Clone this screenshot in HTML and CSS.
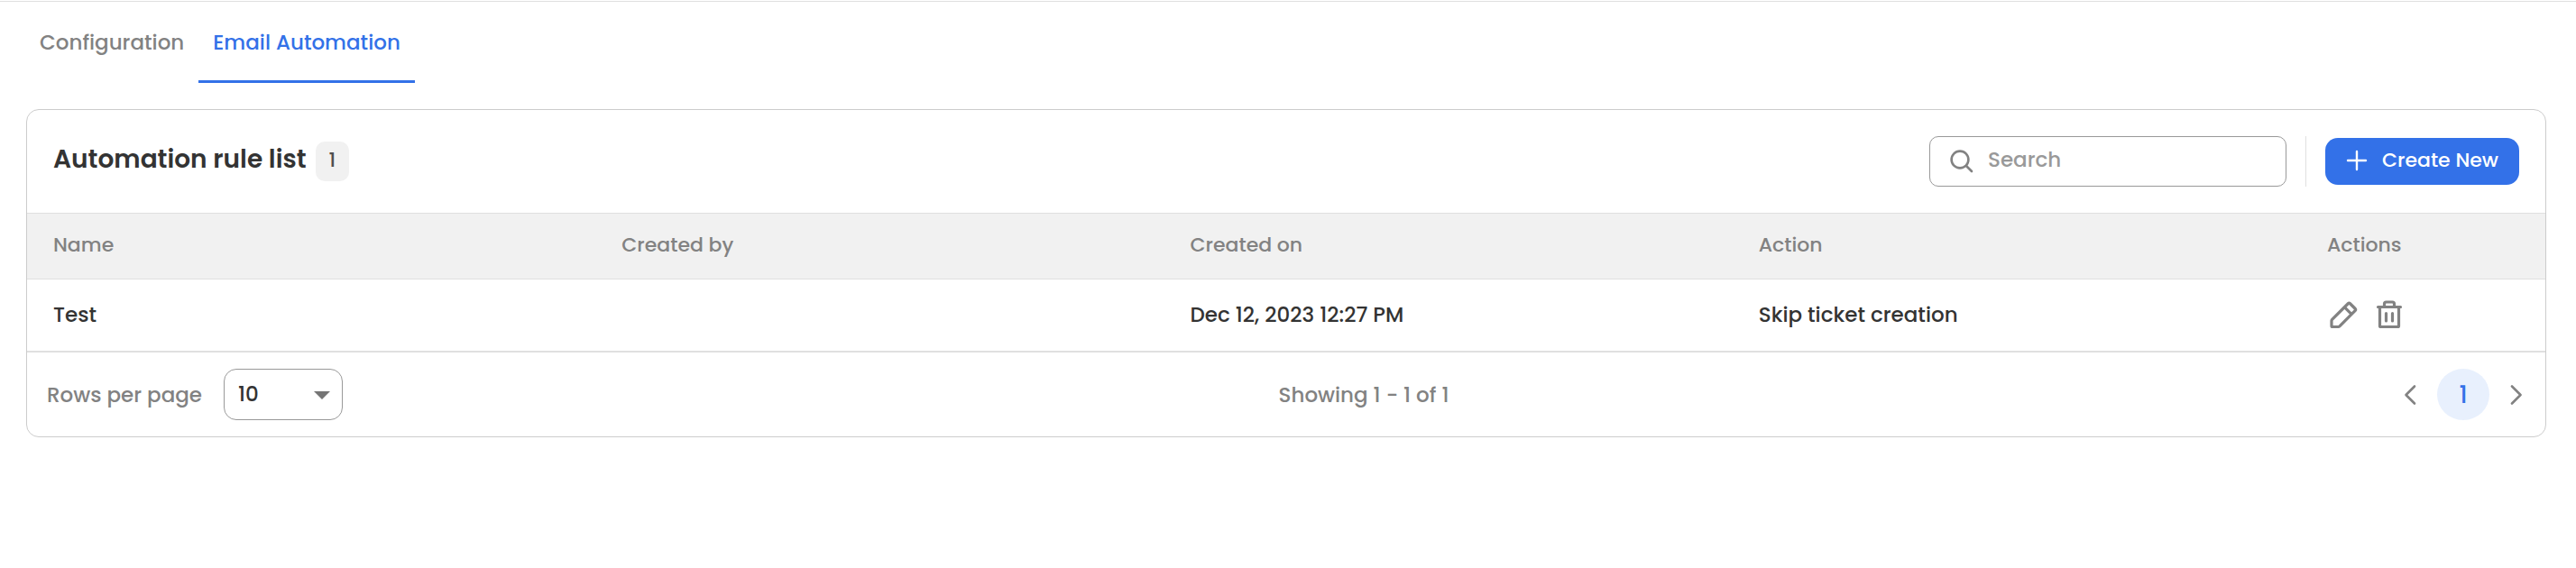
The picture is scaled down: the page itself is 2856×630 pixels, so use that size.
FILE: index.html
```html
<!DOCTYPE html>
<html lang="en">
<head>
    <meta charset="UTF-8">
    <meta name="viewport" content="width=device-width, initial-scale=1.0">
    <title>Email Automation</title>
    <link rel="stylesheet" href="styles.css">
</head>
<body>
    <nav class="tabs">
        <a href="#configuration" class="tab">Configuration</a>
        <a href="#email-automation" class="tab active" aria-current="page">Email Automation</a>
    </nav>

    <main class="card">
        <div class="card-header">
            <h1>Automation rule list</h1>
            <span class="count">1</span>
            <div class="header-right">
                <label class="search">
                    <svg width="26" height="26" viewBox="0 0 26 26" fill="none" stroke="#828282" stroke-width="2.6" stroke-linecap="round" aria-hidden="true">
                        <circle cx="11" cy="11" r="9.4"/>
                        <path d="M18 18l6 6"/>
                    </svg>
                    <input type="text" placeholder="Search" aria-label="Search">
                </label>
                <span class="divider"></span>
                <button type="button" class="create">
                    <svg width="24" height="24" viewBox="0 0 24 24" fill="none" stroke="#fff" stroke-width="2.4" stroke-linecap="round" aria-hidden="true">
                        <path d="M12 2v20M2 12h20"/>
                    </svg>
                    Create New
                </button>
            </div>
        </div>

        <table class="rules">
            <thead>
                <tr>
                    <th>Name</th>
                    <th>Created by</th>
                    <th>Created on</th>
                    <th>Action</th>
                    <th class="actions-col">Actions</th>
                </tr>
            </thead>
            <tbody>
                <tr>
                    <td>Test</td>
                    <td></td>
                    <td>Dec 12, 2023 12:27 PM</td>
                    <td>Skip ticket creation</td>
                    <td>
                        <div class="actions">
                            <button type="button" aria-label="Edit">
                                <svg width="36" height="36" viewBox="0 0 36 36" fill="none" stroke="#828282" stroke-width="3.2" stroke-linejoin="round" aria-hidden="true">
                                    <path d="M6 31.5h6.5q.8 0 1.4-.6L31.3 13.3a1.2 1.2 0 0 0 0-1.8l-6-6a1.2 1.2 0 0 0-1.8 0L5.6 23.3Q5 23.9 5 24.7v5.8q0 1 1 1z"/>
                                    <path d="M19.5 9.8l7.5 7.5"/>
                                </svg>
                            </button>
                            <button type="button" aria-label="Delete">
                                <svg width="36" height="36" viewBox="0 0 36 36" fill="none" stroke="#828282" stroke-width="3.2" stroke-linecap="round" stroke-linejoin="round" aria-hidden="true">
                                    <path d="M5.5 9.5h25M7.5 9.5v21q0 1 1 1h19q1 0 1-1v-21M12.5 9V6q0-2 2-2h7q2 0 2 2v3M14.5 16.5v8.5M21.5 16.5v8.5"/>
                                </svg>
                            </button>
                        </div>
                    </td>
                </tr>
            </tbody>
        </table>

        <div class="card-footer">
            <div class="rows">
                <label for="rows-per-page">Rows per page</label>
                <div class="select">
                    <select id="rows-per-page">
                        <option>10</option>
                        <option>25</option>
                        <option>50</option>
                    </select>
                    <svg class="arrow" width="18" height="9" viewBox="0 0 18 9" aria-hidden="true">
                        <path d="M0 0h18L9 9z" fill="#757575"/>
                    </svg>
                </div>
            </div>
            <span>Showing 1 - 1 of 1</span>
            <div class="pages">
                <button type="button" aria-label="Previous page">
                    <svg width="24" height="24" viewBox="0 0 24 24" fill="none" stroke="#828282" stroke-width="2.6" stroke-linecap="round" stroke-linejoin="round" aria-hidden="true">
                        <path d="M17 2.5L7.5 12l9.5 9.5"/>
                    </svg>
                </button>
                <button type="button" class="page">1</button>
                <button type="button" aria-label="Next page">
                    <svg width="24" height="24" viewBox="0 0 24 24" fill="none" stroke="#828282" stroke-width="2.6" stroke-linecap="round" stroke-linejoin="round" aria-hidden="true">
                        <path d="M7 2.5l9.5 9.5L7 21.5"/>
                    </svg>
                </button>
            </div>
        </div>
    </main>
</body>
</html>
```
FILE: styles.css
```css
* {
    box-sizing: border-box;
}
body {
    margin: 0;
    padding-top: 1px;
    background: #fff;
    color: #333;
    font-family: Poppins, Inter, sans-serif;
    font-size: 23px;
    font-weight: 500;
    line-height: 36px;
}
button, input, select {
    font: inherit;
    color: inherit;
}
button {
    display: flex;
    align-items: center;
    justify-content: center;
    padding: 0;
    border: 0;
    background: none;
    cursor: pointer;
}
svg {
    display: block;
    flex: none;
}
.tabs {
    display: flex;
    padding: 0 28px;
    border-top: 1px solid #e0e0e0;
}
.tab {
    padding: 27px 16px 24px;
    border-bottom: 3px solid transparent;
    color: #828282;
    text-decoration: none;
}
.tab.active {
    border-color: #3371e8;
    color: #3371e8;
}
.card {
    margin: 29px 33px 0 29px;
    border: 1px solid #ccc;
    border-radius: 14px;
    overflow: hidden;
}
.card-header {
    display: flex;
    align-items: center;
    padding: 29px;
}
h1 {
    margin: 0;
    padding-bottom: 4px;
    font-size: 28px;
    font-weight: 600;
}
.count {
    margin-left: 10px;
    padding: 3px 15px 5px;
    border-radius: 10px;
    background: #f1f1f1;
    font-size: 22px;
    color: #4f4f4f;
}
.header-right {
    display: flex;
    align-items: center;
    gap: 21px;
    margin-left: auto;
}
.search {
    display: flex;
    align-items: center;
    gap: 16px;
    width: 396px;
    height: 56px;
    padding: 0 22px;
    border: 1px solid #999;
    border-radius: 10px;
}
.search input {
    flex: 1;
    min-width: 0;
    padding: 0 0 4px;
    border: 0;
    outline: 0;
    background: none;
}
.search input::placeholder {
    color: #999;
    opacity: 1;
}
.divider {
    width: 1px;
    height: 56px;
    background: #e0e0e0;
}
.create {
    gap: 16px;
    height: 52px;
    padding: 0 23px 2px;
    border-radius: 14px;
    background: #3371e8;
    font-size: 22px;
    color: #fff;
}
.rules {
    width: 100%;
    table-layout: fixed;
    border-collapse: separate;
    border-spacing: 0;
}
.rules th, .rules td {
    padding: 0 29px 2px;
    text-align: left;
}
.rules th {
    height: 74px;
    border-top: 1px solid #e0e0e0;
    border-bottom: 1px solid #e0e0e0;
    background: #f1f1f1;
    font-size: 22px;
    font-weight: 500;
    color: #828282;
}
.rules td {
    height: 81px;
    border-bottom: 2px solid #e0e0e0;
}
.actions-col {
    width: 271px;
}
.actions {
    display: flex;
    gap: 15px;
}
.card-footer {
    display: flex;
    align-items: center;
    justify-content: space-between;
    padding: 18px 20px 18px 22px;
    color: #828282;
}
.rows {
    display: flex;
    align-items: center;
    gap: 24px;
}
.select {
    position: relative;
}
.select select {
    appearance: none;
    display: block;
    width: 132px;
    height: 57px;
    padding: 0 15px 2px;
    border: 1px solid #999;
    border-radius: 14px;
    background: #fff;
    color: #333;
}
.arrow {
    position: absolute;
    top: 25px;
    right: 14px;
    pointer-events: none;
}
.pages {
    display: flex;
    align-items: center;
    gap: 18px;
    padding-left: 16px;
}
.page {
    width: 58px;
    height: 57px;
    border-radius: 50%;
    background: #e8f0fd;
    font-size: 26px;
    color: #3371e8;
}
```
